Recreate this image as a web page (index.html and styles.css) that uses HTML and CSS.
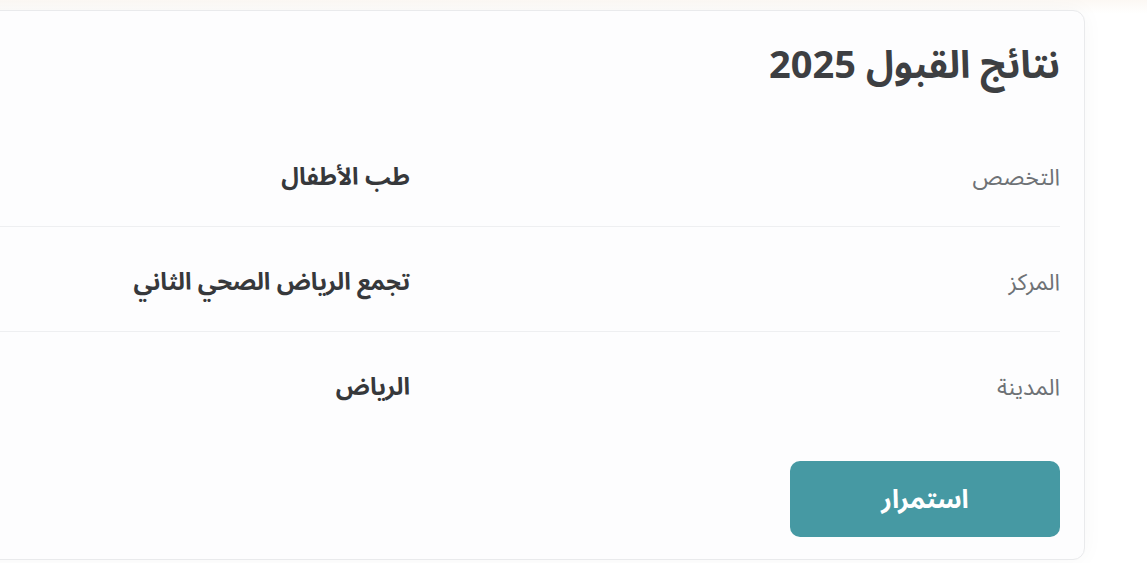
FILE: index.html
```html
<!DOCTYPE html>
<html lang="ar" dir="rtl">
<head>
  <meta charset="UTF-8" />
  <meta name="viewport" content="width=device-width, initial-scale=1.0"/>
  <title>نتائج القبول</title>
  <link rel="stylesheet" href="styles.css">
</head>
<body>
  <div class="card">
    <h1 class="card-title">نتائج القبول 2025</h1>

    <div class="result-list">
      <div class="result-row">
        <span class="label">التخصص</span>
        <span class="value">طب الأطفال</span>
      </div>
      <div class="result-row">
        <span class="label">المركز</span>
        <span class="value">تجمع الرياض الصحي الثاني</span>
      </div>
      <div class="result-row">
        <span class="label">المدينة</span>
        <span class="value">الرياض</span>
      </div>
    </div>

    <button class="continue-btn" type="button">استمرار</button>
  </div>
</body>
</html>
```

FILE: styles.css
```css
* {
  margin: 0;
  padding: 0;
  box-sizing: border-box;
}

body {
  background: linear-gradient(#fcf8f4, #ffffff 14px);
  font-family: "Noto Sans Arabic", "DejaVu Sans", "Noto Sans", sans-serif;
  min-height: 100vh;
  overflow: hidden;
}

.card {
  margin: 10px 62px 0 -60px;
  padding: 30px 24px 22px 24px;
  background-color: #fdfdfe;
  border: 1px solid #e9eaec;
  border-radius: 12px;
  box-shadow: 0 0 22px rgba(0, 0, 0, 0.035);
}

.card-title {
  font-size: 38px;
  font-weight: 700;
  line-height: 50px;
  color: #3d3f42;
  margin-bottom: 31px;
}

.result-row {
  display: grid;
  grid-template-columns: 650px 1fr;
  align-items: center;
  height: 105px;
  padding-top: 7px;
  border-bottom: 1px solid #eeeff1;
}

.result-row:last-child {
  border-bottom: none;
  height: 104px;
}

.label {
  font-size: 23px;
  color: #6e7276;
}

.value {
  font-size: 24px;
  font-weight: 700;
  color: #36383b;
}

.continue-btn {
  display: block;
  margin-top: 25px;
  width: 270px;
  height: 76px;
  border: none;
  border-radius: 10px;
  background-color: #4699a3;
  color: #ffffff;
  font-family: inherit;
  font-size: 26px;
  font-weight: 700;
  cursor: pointer;
}
```
